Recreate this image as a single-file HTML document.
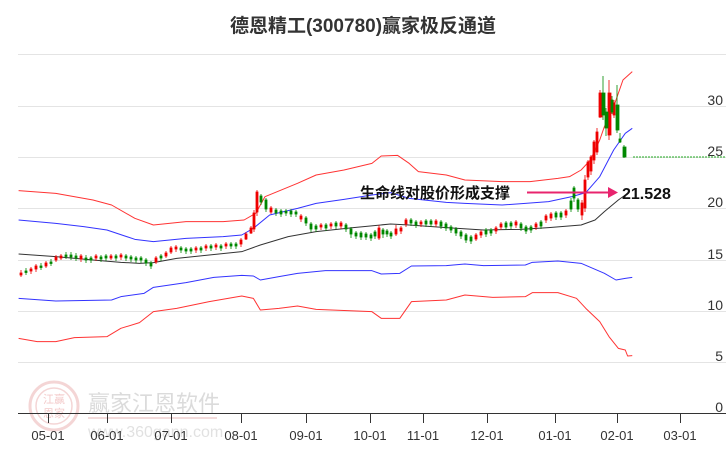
<!DOCTYPE html>
<html><head><meta charset="utf-8"><style>
html,body{margin:0;padding:0;background:#fff;width:726px;height:450px;overflow:hidden}
svg{display:block}
</style></head><body>
<svg width="726" height="450" viewBox="0 0 726 450" xmlns="http://www.w3.org/2000/svg">
<rect width="726" height="450" fill="#fff"/>
<text x="363" y="32" text-anchor="middle" font-family="Liberation Sans, Noto Sans CJK SC, sans-serif" font-size="19" font-weight="bold" fill="#333">德恩精工(300780)赢家极反通道</text>
<g stroke="#e4e4e4" stroke-width="1">
<line x1="18" y1="54.5" x2="726" y2="54.5"/>
<line x1="18" y1="106.5" x2="726" y2="106.5"/>
<line x1="18" y1="157.5" x2="726" y2="157.5"/>
<line x1="18" y1="208.5" x2="726" y2="208.5"/>
<line x1="18" y1="260.5" x2="726" y2="260.5"/>
<line x1="18" y1="311.5" x2="726" y2="311.5"/>
<line x1="18" y1="362.5" x2="726" y2="362.5"/>
</g>
<g font-family="Liberation Sans, sans-serif" font-size="14" fill="#333" text-anchor="end">
<text x="723" y="105">30</text><text x="723" y="156">25</text><text x="723" y="207">20</text>
<text x="723" y="259">15</text><text x="723" y="310">10</text><text x="723" y="361">5</text><text x="723" y="412">0</text>
</g>
<g opacity="0.35">
<circle cx="54" cy="406" r="24" fill="none" stroke="#e08a8a" stroke-width="3"/>
<circle cx="54" cy="406" r="18" fill="none" stroke="#e08a8a" stroke-width="1.5"/>
<text x="54" y="403" text-anchor="middle" font-family="Noto Sans CJK SC, sans-serif" font-size="11" fill="#d66">江赢</text>
<text x="54" y="417" text-anchor="middle" font-family="Noto Sans CJK SC, sans-serif" font-size="11" fill="#d66">恩家</text>
<text x="88" y="411" font-family="Noto Sans CJK SC, sans-serif" font-size="22" fill="#999">赢家江恩软件</text>
<line x1="88" y1="418" x2="217" y2="418" stroke="#d99" stroke-width="2"/>
<text x="88" y="437" font-family="Liberation Sans, sans-serif" font-size="16" fill="#aaa">www.360gann.com</text>
</g>
<line x1="18" y1="413.5" x2="726" y2="413.5" stroke="#333" stroke-width="1"/>
<g stroke="#333" stroke-width="1">
<line x1="48.5" y1="413" x2="48.5" y2="423"/><line x1="107.5" y1="413" x2="107.5" y2="423"/>
<line x1="171.5" y1="413" x2="171.5" y2="423"/><line x1="241.5" y1="413" x2="241.5" y2="423"/>
<line x1="306.5" y1="413" x2="306.5" y2="423"/><line x1="370.5" y1="413" x2="370.5" y2="423"/>
<line x1="423.5" y1="413" x2="423.5" y2="423"/><line x1="487.5" y1="413" x2="487.5" y2="423"/>
<line x1="555.5" y1="413" x2="555.5" y2="423"/><line x1="617.5" y1="413" x2="617.5" y2="423"/>
<line x1="680.5" y1="413" x2="680.5" y2="423"/>
</g>
<g font-family="Liberation Sans, sans-serif" font-size="13" fill="#333" text-anchor="middle">
<text x="48" y="440">05-01</text><text x="107" y="440">06-01</text><text x="171" y="440">07-01</text>
<text x="241" y="440">08-01</text><text x="306" y="440">09-01</text><text x="370" y="440">10-01</text>
<text x="423" y="440">11-01</text><text x="487" y="440">12-01</text><text x="555" y="440">01-01</text>
<text x="617" y="440">02-01</text><text x="680" y="440">03-01</text>
</g>
<g transform="scale(0.4649,0.33333)" fill="none" stroke-width="1" stroke-linejoin="round">
<polyline vector-effect="non-scaling-stroke" stroke="#f33" points="40,572 120,580 200,600 240,615 290,655 330,675 400,665 480,665 525,660 550,640 570,590 640,550 680,525 740,510 800,490 820,468 855,466 880,490 900,515 960,525 1000,540 1080,545 1140,545 1200,535 1225,530 1250,510 1270,480 1290,420 1300,380 1320,320 1340,240 1360,215"/>
<polyline vector-effect="non-scaling-stroke" stroke="#33f" points="40,660 120,670 180,680 230,690 290,718 330,725 400,715 480,710 520,705 545,685 580,645 640,625 680,610 740,598 800,585 840,578 880,595 960,607 1000,610 1080,615 1130,610 1180,605 1230,590 1260,578 1290,530 1320,450 1345,400 1360,385"/>
<polyline vector-effect="non-scaling-stroke" stroke="#333" points="40,762 120,770 200,780 260,787 300,790 330,788 380,775 450,765 520,755 560,735 620,710 680,695 760,683 840,672 880,675 960,683 1040,690 1120,688 1180,683 1250,675 1280,660 1300,635 1330,600 1345,585"/>
<polyline vector-effect="non-scaling-stroke" stroke="#33f" points="40,895 120,903 240,900 260,890 310,880 330,862 400,848 460,832 520,826 545,828 560,840 600,830 640,820 700,812 800,812 820,822 860,820 885,798 960,797 1000,792 1040,797 1130,795 1145,787 1200,783 1250,790 1280,808 1300,820 1325,840 1345,835 1360,832"/>
<polyline vector-effect="non-scaling-stroke" stroke="#f33" points="40,1015 80,1025 120,1025 160,1013 230,1010 260,985 300,968 330,935 380,925 450,905 520,888 545,895 560,930 600,925 640,918 680,928 800,935 820,955 860,955 885,905 960,900 1000,885 1060,892 1130,890 1145,878 1200,878 1240,895 1260,925 1290,965 1310,1010 1330,1045 1345,1050 1350,1068 1360,1067"/>
</g>
<!-- candles: red -->
<g fill="#e00" stroke="#e00" stroke-width="0.8">
<path fill="none" d="M21 270V277M31 267V274M36 264V272M46 261V268M56 255V262M61 254V260M81 254V262M96 254V261M111 254V260M121 253V260M156 256V264M166 251V258M171 246V254M176 245V252M196 246V253M206 244V251M216 243V250M226 242V249M241 238V247M246 232V240M251 226V234M254 210V232M257 190V216M271 206V214M301 214V222M321 223V230M331 222V229M341 221V229M379 225V240M396 225V236M401 226V234M406 218V227M421 220V227M436 219V227M476 233V241M481 230V238M496 226V234M501 222V230M516 220V228M536 222V230M546 214V223M551 212V221M566 209V218M582 200V220M585 175V212M588 160V180M591 155V175M594 140V164M597 128V155M600 90V118M609 80V140M614 100V118"/>
<rect x="20" y="273" width="2" height="2"/><rect x="30" y="269" width="2" height="2"/><rect x="35" y="266" width="2" height="3"/>
<rect x="45" y="263" width="2" height="3"/><rect x="55" y="257" width="2" height="3"/><rect x="60" y="256" width="2" height="2"/>
<rect x="80" y="256" width="2" height="3"/><rect x="95" y="256" width="2" height="2"/><rect x="110" y="256" width="2" height="2"/>
<rect x="120" y="255" width="2" height="2"/><rect x="155" y="258" width="2" height="4"/><rect x="165" y="253" width="2" height="3"/>
<rect x="170" y="248" width="2" height="4"/><rect x="175" y="247" width="2" height="2"/><rect x="195" y="248" width="2" height="2"/>
<rect x="205" y="246" width="2" height="2"/><rect x="215" y="245" width="2" height="2"/><rect x="225" y="244" width="2" height="2"/>
<rect x="240" y="240" width="2" height="4"/><rect x="245" y="234" width="2" height="5"/><rect x="250" y="228" width="2" height="5"/>
<rect x="253" y="213" width="2" height="16"/><rect x="256" y="192" width="2" height="20"/><rect x="270" y="208" width="2" height="4"/>
<rect x="300" y="216" width="2" height="3"/><rect x="320" y="225" width="2" height="2"/><rect x="330" y="224" width="2" height="2"/>
<rect x="340" y="223" width="2" height="3"/><rect x="378" y="228" width="2" height="10"/><rect x="395" y="229" width="2" height="5"/>
<rect x="400" y="228" width="2" height="3"/><rect x="405" y="220" width="2" height="4"/><rect x="420" y="222" width="2" height="2"/>
<rect x="435" y="221" width="2" height="3"/><rect x="475" y="235" width="2" height="4"/><rect x="480" y="232" width="2" height="3"/>
<rect x="495" y="228" width="2" height="3"/><rect x="500" y="224" width="2" height="3"/><rect x="515" y="222" width="2" height="3"/>
<rect x="535" y="224" width="2" height="3"/><rect x="545" y="216" width="2" height="4"/><rect x="550" y="214" width="2" height="4"/>
<rect x="565" y="211" width="2" height="4"/><rect x="581" y="203" width="2" height="12"/><rect x="584" y="180" width="2" height="28"/>
<rect x="587" y="162" width="2" height="15"/><rect x="590" y="157" width="2" height="14"/><rect x="593" y="142" width="2" height="18"/>
<rect x="596" y="132" width="2" height="20"/><rect x="599" y="93" width="3" height="24"/><rect x="608" y="93" width="3" height="42"/>
<rect x="613" y="103" width="2" height="12"/>
</g>
<!-- candles: green -->
<g fill="#080" stroke="#080" stroke-width="0.8">
<path fill="none" d="M26 268V275M41 263V270M51 259V266M66 252V259M71 252V260M76 253V261M86 255V263M91 256V263M101 255V262M106 254V261M116 254V261M126 254V261M131 255V262M136 256V263M141 256V263M146 258V266M151 261V269M161 254V261M181 246V253M186 247V254M191 247V254M201 246V253M211 244V251M221 244V251M231 242V249M236 242V249M261 194V205M266 198V212M276 208V216M281 209V217M286 209V216M291 209V217M296 210V217M306 216V226M311 222V232M316 224V232M326 223V231M336 221V229M346 223V232M351 227V238M356 231V239M361 231V240M366 232V240M371 233V241M375 230V239M383 228V238M387 229V237M391 231V239M411 218V226M416 220V228M426 219V227M431 219V227M441 220V229M446 222V231M451 225V233M456 227V236M461 230V239M466 233V243M471 235V244M486 228V237M491 228V236M506 221V230M511 221V229M521 222V231M526 225V234M531 225V233M541 220V229M556 211V220M561 211V220M571 198V212M574 186V202M578 198V212M603 76V120M606 108V136M612 96V114M617 85V133M620 133V143M624 145V158"/>
<rect x="25" y="271" width="2" height="1.5"/><rect x="40" y="266" width="2" height="1.5"/><rect x="50" y="262" width="2" height="1.5"/>
<rect x="65" y="255" width="2" height="1.5"/><rect x="70" y="255" width="2" height="2"/><rect x="75" y="256" width="2" height="2"/>
<rect x="85" y="258" width="2" height="2"/><rect x="90" y="258" width="2" height="2"/><rect x="100" y="257" width="2" height="2"/>
<rect x="105" y="256" width="2" height="2"/><rect x="115" y="256" width="2" height="2"/><rect x="125" y="256" width="2" height="2"/>
<rect x="130" y="257" width="2" height="2"/><rect x="135" y="258" width="2" height="2"/><rect x="140" y="258" width="2" height="2"/>
<rect x="145" y="260" width="2" height="3"/><rect x="150" y="263" width="2" height="3"/><rect x="160" y="256" width="2" height="2"/>
<rect x="180" y="248" width="2" height="2"/><rect x="185" y="249" width="2" height="2"/><rect x="190" y="249" width="2" height="2"/>
<rect x="200" y="248" width="2" height="2"/><rect x="210" y="246" width="2" height="2"/><rect x="220" y="246" width="2" height="2"/>
<rect x="230" y="244" width="2" height="2"/><rect x="235" y="244" width="2" height="2"/><rect x="260" y="196" width="2" height="6"/>
<rect x="265" y="200" width="2" height="9"/><rect x="275" y="210" width="2" height="3"/><rect x="280" y="211" width="2" height="3"/>
<rect x="285" y="211" width="2" height="2"/><rect x="290" y="211" width="2" height="3"/><rect x="295" y="212" width="2" height="2"/>
<rect x="305" y="218" width="2" height="5"/><rect x="310" y="224" width="2" height="5"/><rect x="315" y="226" width="2" height="3"/>
<rect x="325" y="225" width="2" height="3"/><rect x="335" y="223" width="2" height="3"/><rect x="345" y="225" width="2" height="4"/>
<rect x="350" y="229" width="2" height="5"/><rect x="355" y="233" width="2" height="3"/><rect x="360" y="233" width="2" height="4"/>
<rect x="365" y="234" width="2" height="3"/><rect x="370" y="235" width="2" height="3"/><rect x="374" y="232" width="2" height="4"/>
<rect x="382" y="230" width="2" height="4"/><rect x="386" y="231" width="2" height="3"/><rect x="390" y="233" width="2" height="3"/>
<rect x="410" y="220" width="2" height="3"/><rect x="415" y="222" width="2" height="3"/><rect x="425" y="221" width="2" height="3"/>
<rect x="430" y="221" width="2" height="3"/><rect x="440" y="222" width="2" height="4"/><rect x="445" y="224" width="2" height="4"/>
<rect x="450" y="227" width="2" height="3"/><rect x="455" y="229" width="2" height="4"/><rect x="460" y="232" width="2" height="4"/>
<rect x="465" y="235" width="2" height="5"/><rect x="470" y="237" width="2" height="4"/><rect x="485" y="230" width="2" height="4"/>
<rect x="490" y="230" width="2" height="3"/><rect x="505" y="223" width="2" height="4"/><rect x="510" y="223" width="2" height="3"/>
<rect x="520" y="224" width="2" height="4"/><rect x="525" y="227" width="2" height="4"/><rect x="530" y="227" width="2" height="3"/>
<rect x="540" y="222" width="2" height="4"/><rect x="555" y="213" width="2" height="4"/><rect x="560" y="213" width="2" height="4"/>
<rect x="570" y="201" width="2" height="8"/><rect x="573" y="188" width="2" height="10"/><rect x="577" y="200" width="2" height="9"/>
<rect x="602" y="93" width="3" height="22"/><rect x="605" y="112" width="3" height="16"/><rect x="611" y="100" width="2" height="12"/>
<rect x="616" y="105" width="3" height="25"/><rect x="619" y="139" width="2" height="3"/><rect x="623" y="147" width="3" height="10"/>
</g>
<line x1="633" y1="157" x2="726" y2="157" stroke="#2a2" stroke-width="1" stroke-dasharray="2,1"/>
<text x="360" y="198" font-family="Liberation Sans, Noto Sans CJK SC, sans-serif" font-size="15" font-weight="bold" fill="#111">生命线对股价形成支撑</text>
<line x1="527" y1="192.5" x2="610" y2="192.5" stroke="#e8246e" stroke-width="2"/>
<polygon points="608,187 618,192.5 608,198" fill="#e8246e"/>
<text x="622" y="199" font-family="Liberation Sans, sans-serif" font-size="16" font-weight="bold" fill="#111">21.528</text>
</svg>
</body></html>
